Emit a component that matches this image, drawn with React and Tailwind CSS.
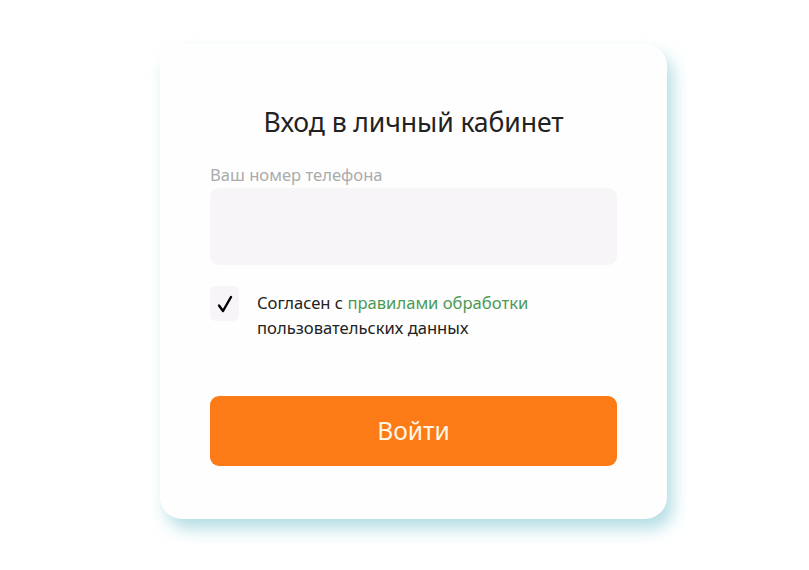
export default function App() {
  return (
    <div
      className="min-h-[570px] w-full bg-white flex pl-[160px] pt-[44px]"
      style={{ fontFamily: '"Noto Sans", "Open Sans", sans-serif' }}
    >
      {/* Login card */}
      <div className="w-[507px] h-[475px] bg-[#fefefe] rounded-[22px] shadow-[6px_10px_16px_rgba(120,195,205,0.55)] px-[50px] pt-[60px]">
        <h1 className="text-center text-[26.6px] leading-[36px] text-[#222] tracking-[-0.1px]">
          Вход в личный кабинет
        </h1>

        <label className="block mt-[25px] text-[16.6px] leading-[20px] text-[#ababab]">
          Ваш номер телефона
        </label>
        <div className="mt-[3px] h-[77px] rounded-[9px] bg-[#f7f5f7]"></div>

        <div className="flex items-start mt-[21px]">
          <div className="w-[29px] h-[35px] rounded-[6px] bg-[#f7f5f7] flex items-center justify-center shrink-0">
            <svg width="16" height="18" viewBox="0 0 16 18" fill="none">
              <path d="M2 10.5 L6 16 L14 2" stroke="#000" strokeWidth="2.4" strokeLinecap="round" strokeLinejoin="round" />
            </svg>
          </div>
          <p className="ml-[18px] mt-[4px] text-[16.6px] leading-[25px] text-[#222]">
            Согласен с <span className="text-[#4b9a55]">правилами обработки</span>
            <br />
            пользовательских данных
          </p>
        </div>

        <button className="mt-[56px] w-full h-[70px] rounded-[9px] bg-[#fc7b16] text-[#fff6e6] text-[24.6px]">
          Войти
        </button>
      </div>
    </div>
  );
}
